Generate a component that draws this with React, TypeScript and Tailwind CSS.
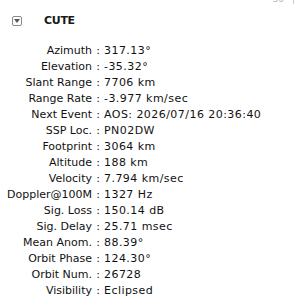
const rows: [string, string][] = [
  ["Azimuth", "317.13°"],
  ["Elevation", "-35.32°"],
  ["Slant Range", "7706 km"],
  ["Range Rate", "-3.977 km/sec"],
  ["Next Event", "AOS: 2026/07/16 20:36:40"],
  ["SSP Loc.", "PN02DW"],
  ["Footprint", "3064 km"],
  ["Altitude", "188 km"],
  ["Velocity", "7.794 km/sec"],
  ["Doppler@100M", "1327 Hz"],
  ["Sig. Loss", "150.14 dB"],
  ["Sig. Delay", "25.71 msec"],
  ["Mean Anom.", "88.39°"],
  ["Orbit Phase", "124.30°"],
  ["Orbit Num.", "26728"],
  ["Visibility", "Eclipsed"],
]

export default function App() {
  return (
    <div className="h-[307px] w-[306px] overflow-hidden bg-white font-['DejaVu_Sans',sans-serif] text-[11px] text-[#111]">
      <div className="flex h-[4px] items-end justify-end gap-[9px] overflow-hidden pr-[12px]">
        <span className="text-[9px] leading-[9px] text-[#b0b8c8]">30</span>
        <div className="h-[4px] w-px bg-[#c8c8c8]" />
      </div>
      <div className="flex items-center pl-[12px] pt-[9px]">
        <div className="flex h-[10px] w-[10px] items-center justify-center rounded-[2px] border border-[#8a8a8a]">
          <svg width="6" height="4" viewBox="0 0 6 4">
            <path d="M0 0 L6 0 L3 4 Z" fill="#555" />
          </svg>
        </div>
        <span className="ml-[22px] text-[11px] font-bold tracking-[-0.3px] text-[#1a1a1a]">CUTE</span>
      </div>
      <div className="mt-[13px] flex flex-col">
        {rows.map(([label, value]) => (
          <div key={label} className="flex h-[16px] items-center leading-[16px]">
            <span className="w-[92px] whitespace-nowrap text-right">{label}</span>
            <span className="w-[12px] text-center">:</span>
            <span className="whitespace-nowrap tracking-[0.45px]">{value}</span>
          </div>
        ))}
      </div>
    </div>
  )
}
